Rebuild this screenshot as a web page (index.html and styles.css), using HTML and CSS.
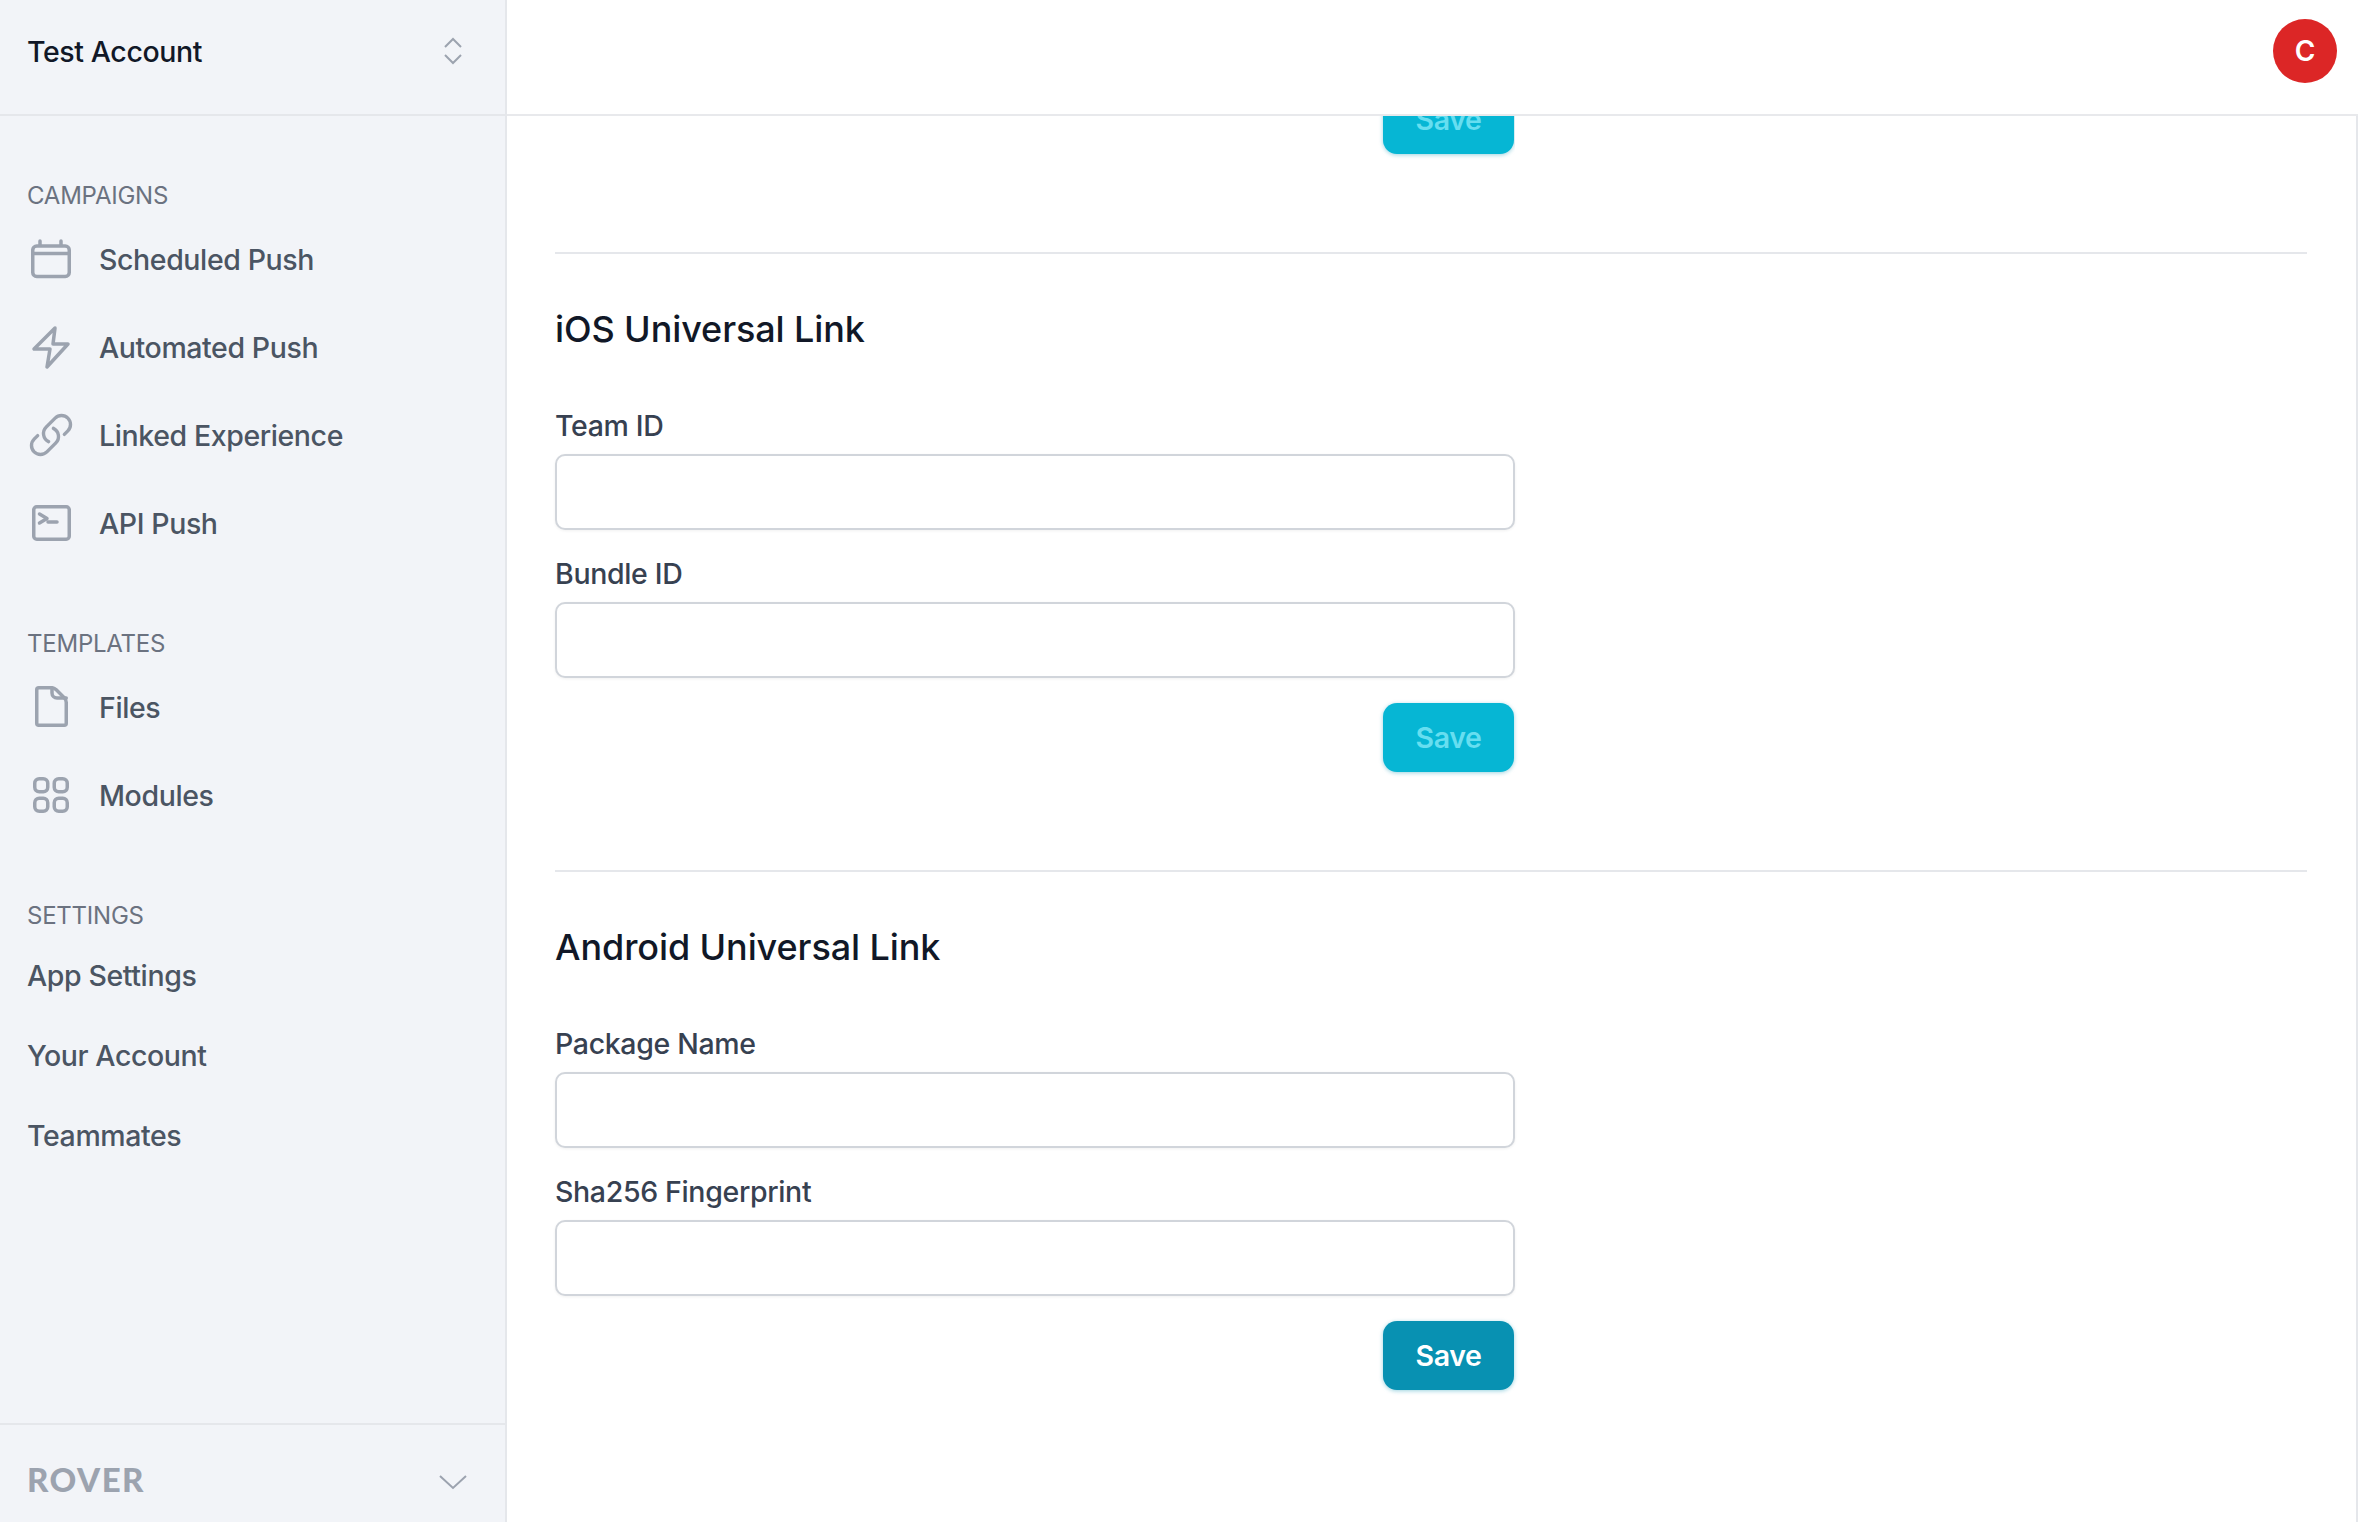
FILE: index.html
```html
<!DOCTYPE html>
<html lang="en">
<head>
<meta charset="utf-8">
<title>Settings</title>
<link rel="stylesheet" href="styles.css">
</head>
<body>
<div class="app">
  <aside class="sidebar">
    <div class="account">
      <span class="account-name">Test Account</span>
      <svg class="updown" width="20" height="28" viewBox="0 0 20 28"><path d="M2 10l8-8 8 8M2 18l8 8 8-8"/></svg>
    </div>
    <nav class="nav">
      <div class="group">
        <div class="group-label">CAMPAIGNS</div>
        <a class="item"><svg class="icon" viewBox="0 0 48 48"><rect x="5.75" y="11" width="36.5" height="30.5" rx="4"/><path d="M5.750 18.500h36.500M13 6v4M34 6v4"/></svg><span>Scheduled Push</span></a>
        <a class="item"><svg class="icon" viewBox="0 0 48 48"><path d="M28 5L7 26h16l-3 18 21-23H26z"/></svg><span>Automated Push</span></a>
        <a class="item"><svg class="icon icon-24" viewBox="0 0 24 24"><path d="M13.19 8.688a4.5 4.5 0 0 1 1.242 7.244l-4.5 4.500a4.500 4.500 0 0 1-6.364-6.364l1.757-1.757m13.35-.622 1.757-1.757a4.500 4.500 0 0 0-6.364-6.364l-4.500 4.500a4.500 4.500 0 0 0 1.242 7.244"/></svg><span>Linked Experience</span></a>
        <a class="item"><svg class="icon" viewBox="0 0 48 48"><rect x="6.75" y="7.75" width="35.5" height="32.5" rx="3"/><path d="M12.500 15l7.500 4.500-7.500 4.500M21 23h9"/></svg><span>API Push</span></a>
      </div>
      <div class="group">
        <div class="group-label group-label-tight">TEMPLATES</div>
        <a class="item"><svg class="icon" viewBox="0 0 48 48"><path d="M11.750 4.750h13c2 0 3 .5 4.500 2L37.500 15c1.500 1.500 1.750 2.500 1.750 4.500V40.250a2 2 0 01-2 2H11.750a2 2 0 01-2-2V6.750a2 2 0 012-2z"/><path d="M25 4.750V10a5 5 0 005 5h9.250"/></svg><span>Files</span></a>
        <a class="item"><svg class="icon" viewBox="0 0 48 48"><rect x="7.75" y="7.75" width="13" height="13" rx="4.500"/><rect x="27.25" y="7.75" width="13" height="13" rx="4.500"/><rect x="7.75" y="27.25" width="13" height="13" rx="4.500"/><rect x="27.25" y="27.25" width="13" height="13" rx="4.500"/></svg><span>Modules</span></a>
      </div>
      <div class="group">
        <div class="group-label group-label-plain">SETTINGS</div>
        <a class="item item-plain"><span>App Settings</span></a>
        <a class="item item-plain"><span>Your Account</span></a>
        <a class="item item-plain"><span>Teammates</span></a>
      </div>
    </nav>
    <div class="brand">
      <span class="brand-name">ROVER</span>
      <svg class="brand-chevron" width="30" height="16" viewBox="0 0 30 16"><path d="M2 2l13 12L28 2"/></svg>
    </div>
  </aside>
  <div class="main">
    <header class="topbar"><div class="avatar">C</div></header>
    <div class="content">
      <div class="clipped"><button class="save save-off">Save</button></div>
      <section class="panel">
        <h2 class="panel-title">iOS Universal Link</h2>
        <label class="field-label">Team ID</label>
        <input class="field-input" type="text">
        <label class="field-label">Bundle ID</label>
        <input class="field-input" type="text">
        <div class="actions"><button class="save save-off">Save</button></div>
      </section>
      <section class="panel">
        <h2 class="panel-title">Android Universal Link</h2>
        <label class="field-label">Package Name</label>
        <input class="field-input" type="text">
        <label class="field-label">Sha256 Fingerprint</label>
        <input class="field-input" type="text">
        <div class="actions"><button class="save">Save</button></div>
      </section>
    </div>
  </div>
</div>
</body>
</html>
```
FILE: styles.css
```css
* { box-sizing: border-box; }
html, body { margin: 0; height: 100%; overflow: hidden; background: #fff; }
body { font-family: Inter, "Liberation Sans", sans-serif; }
.app { display: flex; height: 1522px; }

.sidebar { width: 507px; flex: none; display: flex; flex-direction: column; background: #f2f4f8; border-right: 2px solid #e5e7eb; }
.account { height: 116px; flex: none; display: flex; align-items: center; justify-content: space-between; padding: 0 42px 12px 27px; border-bottom: 2px solid #e5e7eb; }
.account-name { font-size: 28.500px; font-weight: 550; letter-spacing: -.014em; color: #111827; }
.updown path { fill: none; stroke: #9ca3af; stroke-width: 2; }

.nav { flex: 1; padding-top: 61px; }
.group { margin-bottom: 59px; }
.group-label { height: 38px; line-height: 37px; padding-left: 27px; font-size: 24px; letter-spacing: -.01em; color: #6b7280; }
.group-label-tight { height: 37px; line-height: 35px; }
.group-label-plain { margin-bottom: -1px; line-height: 35px; }
.item { height: 88px; display: flex; align-items: center; gap: 24px; padding-left: 27px; font-size: 28.500px; font-weight: 550; letter-spacing: -.014em; color: #4b5563; }
.item-plain { height: 80px; color: #4b5563; }
.icon { width: 48px; height: 48px; fill: none; stroke: #9ca3af; stroke-width: 3.500; stroke-linecap: round; stroke-linejoin: round; }
.icon-24 { stroke-width: 1.700; }

.brand { height: 99px; flex: none; display: flex; align-items: center; justify-content: space-between; padding: 11px 37px 0 27px; border-top: 2px solid #e5e7eb; }
.brand-name { font-family: Lato, sans-serif; font-size: 33px; font-weight: 900; letter-spacing: 1.500px; color: #9ca3af; }
.brand-chevron { margin-top: 5px; }
.brand-chevron path { fill: none; stroke: #9ca3af; stroke-width: 2; }

.main { flex: 1; min-width: 0; display: flex; flex-direction: column; border-right: 2px solid #e5e7eb; }
.topbar { height: 116px; flex: none; margin-right: -2px; display: flex; align-items: flex-start; justify-content: flex-end; padding: 19px 21px 0 0; background: #fff; border-bottom: 2px solid #e8e9ec; }
.avatar { width: 64px; height: 64px; border-radius: 50%; background: #dc2626; color: #fff; font-size: 28px; font-weight: 600; display: flex; align-items: center; justify-content: center; }

.content { flex: 1; padding: 0 49px 0 48px; overflow: hidden; }
.clipped { height: 136px; overflow: hidden; display: flex; align-items: flex-start; justify-content: flex-end; width: 960px; }
.clipped .save { margin-top: -31px; }

.panel { border-top: 2px solid #e5e7eb; padding-top: 48px; height: 618px; }
.panel-title { margin: 0 0 49px; font-size: 36px; line-height: 54px; font-weight: 500; letter-spacing: -.1px; color: #111827; }
.field-label { display: block; height: 42px; line-height: 42px; font-size: 28.500px; font-weight: 500; letter-spacing: -.012em; color: #374151; margin-bottom: 7px; }
.field-input { display: block; width: 960px; height: 76px; margin-bottom: 23px; border: 2px solid #d1d5db; border-radius: 10px; background: #fff; box-shadow: 0 1px 3px rgba(0,0,0,.06); outline: none; }
.actions { width: 960px; display: flex; justify-content: flex-end; padding-top: 2px; }
.save { width: 131px; height: 69px; margin-right: 1px; border: 0; border-radius: 14px; background: #0891b2; color: #fff; font-family: inherit; font-size: 28.500px; font-weight: 600; letter-spacing: -.012em; box-shadow: 0 1px 4px rgba(8,145,178,.4); }
.save-off { background: #06b6d4; color: #67def0; }
```
